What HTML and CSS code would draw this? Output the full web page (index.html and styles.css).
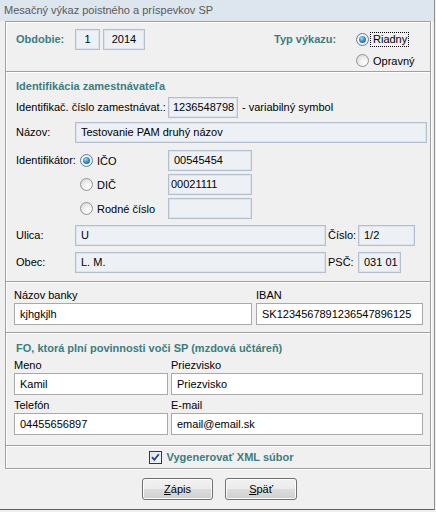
FILE: index.html
```html
<!DOCTYPE html>
<html lang="sk">
<head>
<meta charset="utf-8">
<title>Mesačný výkaz poistného a príspevkov SP</title>
<link rel="stylesheet" href="styles.css">
</head>
<body>
<div class="window">
  <div class="titlebar">Mesačný výkaz poistného a príspevkov SP</div>
  <div class="frame">
    <section class="panel p1">
      <div class="period">
        <span class="blbl w59">Obdobie:</span>
        <span class="ro f-month">1</span>
        <span class="ro f-year">2014</span>
      </div>
      <div class="typ">
        <span class="blbl typ-lbl">Typ výkazu:</span>
        <div class="radios">
          <label class="ropt"><span class="radio on"></span><span class="focus">Riadny</span></label>
          <label class="ropt"><span class="radio"></span><span class="rtext">Opravný</span></label>
        </div>
      </div>
    </section>

    <section class="panel p2">
      <h2 class="ptitle">Identifikácia zamestnávateľa</h2>
      <div class="row r1">
        <span class="lbl w152">Identifikač. číslo zamestnávat.:</span>
        <span class="ro f-ico">1236548798</span>
        <span class="lbl after">- variabilný symbol</span>
      </div>
      <div class="row r2">
        <span class="lbl w59">Názov:</span>
        <span class="ro grow">Testovanie PAM druhý názov</span>
      </div>
      <div class="idgrid">
        <span class="lbl idlbl">Identifikátor:</span>
        <label class="ropt idopt"><span class="radio on"></span><span class="rtext">IČO</span></label>
        <span class="ro f-id pad5">00545454</span>
        <label class="ropt idopt"><span class="radio"></span><span class="rtext">DIČ</span></label>
        <span class="ro f-id pad2">00021111</span>
        <label class="ropt idopt"><span class="radio"></span><span class="rtext">Rodné číslo</span></label>
        <span class="ro f-id"></span>
      </div>
      <div class="row r6">
        <span class="lbl w59">Ulica:</span>
        <span class="ro f-street">U</span>
        <span class="lbl w32">Číslo:</span>
        <span class="ro f-num">1/2</span>
      </div>
      <div class="row r7">
        <span class="lbl w59">Obec:</span>
        <span class="ro f-street">L. M.</span>
        <span class="lbl w32">PSČ:</span>
        <span class="ro f-psc">031 01</span>
      </div>
    </section>

    <section class="panel p3">
      <div class="col c-bank">
        <span class="clbl">Názov banky</span>
        <span class="wf">kjhgkjlh</span>
      </div>
      <div class="col c-iban">
        <span class="clbl">IBAN</span>
        <span class="wf">SK1234567891236547896125</span>
      </div>
    </section>

    <section class="panel p4">
      <h2 class="ptitle t4">FO, ktorá plní povinnosti voči SP (mzdová učtáreň)</h2>
      <div class="fogrid">
        <div class="col"><span class="clbl">Meno</span><span class="wf">Kamil</span></div>
        <div class="col"><span class="clbl">Priezvisko</span><span class="wf">Priezvisko</span></div>
        <div class="col"><span class="clbl">Telefón</span><span class="wf">04455656897</span></div>
        <div class="col"><span class="clbl">E-mail</span><span class="wf">email@email.sk</span></div>
      </div>
    </section>

    <section class="panel p5">
      <label class="chk">
        <svg class="cbox" width="13" height="13" viewBox="0 0 13 13" aria-hidden="true">
          <defs>
            <linearGradient id="cg" x1="0" y1="0" x2="1" y2="1">
              <stop offset="0" stop-color="#dfe6ee"/>
              <stop offset="1" stop-color="#ffffff"/>
            </linearGradient>
          </defs>
          <rect x="0.5" y="0.5" width="12" height="12" fill="#ffffff" stroke="#1e395b"/>
          <rect x="2" y="2" width="9" height="9" fill="url(#cg)" stroke="#c5cfdb" stroke-width="0.6"/>
          <path d="M3 6.2 L5.3 8.8 L9.8 3.2" fill="none" stroke="#21409a" stroke-width="1.8"/>
        </svg>
        <span class="blbl">Vygenerovať XML súbor</span>
      </label>
    </section>
  </div>
  <div class="buttons">
    <button class="btn" type="button"><u>Z</u>ápis</button>
    <button class="btn" type="button"><u>S</u>päť</button>
  </div>
</div>
</body>
</html>
```
FILE: styles.css
```css
html, body {
  margin: 0;
  padding: 0;
  background: #f0f0f0;
}
body {
  font-family: "Liberation Sans", Arial, sans-serif;
  font-size: 11px;
  color: #000;
}
.window {
  width: 435px;
  height: 510px;
  box-sizing: border-box;
  border-right: 1px solid #8c8c8c;
  border-bottom: 1px solid #5f5f5f;
  background: #f0f0f0;
}
.titlebar {
  height: 21px;
  line-height: 20px;
  padding-left: 4px;
  background: #dde5ee;
  color: #5a5a5a;
  font-size: 11px;
  white-space: nowrap;
}
.frame {
  margin-left: 5px;
  width: 424px;
  border-left: 1px solid #a0a0a0;
  border-right: 1px solid #a0a0a0;
  border-top: 1px solid #a0a0a0;
  box-shadow: 1px 0 0 #ffffff, inset 1px 1px 0 #ffffff;
}
.panel {
  border-bottom: 1px solid #a0a0a0;
  box-shadow: 0 1px 0 #ffffff;
  box-sizing: border-box;
}
.lbl {
  display: inline-block;
  white-space: nowrap;
  line-height: 21px;
}
.blbl {
  font-weight: bold;
  color: #3c7d7e;
  white-space: nowrap;
}
.w59 { width: 59px; }
.w152 { width: 152px; }
.w32 { width: 32px; padding-left: 2px; box-sizing: border-box; }

.ro {
  display: inline-block;
  box-sizing: border-box;
  height: 21px;
  line-height: 19px;
  padding-left: 5px;
  border: 1px solid #b3bfcc;
  box-shadow: inset 0 0 0 1px #dde4ec;
  background: #edf1f5;
  white-space: nowrap;
  overflow: hidden;
}

/* Panel 1 */
.p1 {
  height: 50px;
  display: flex;
  padding: 7px 0 0 10px;
}
.period {
  display: flex;
  align-items: center;
  height: 21px;
  width: 258px;
}
.period .blbl { line-height: 21px; }
.f-month { width: 25px; margin-right: 3px; text-align: center; padding-left: 0; }
.f-year { width: 42px; text-align: center; padding-left: 0; }
.typ { display: flex; }
.typ-lbl { width: 82px; line-height: 21px; }
.radios { display: flex; flex-direction: column; }
.ropt {
  display: flex;
  align-items: center;
  height: 21px;
  white-space: nowrap;
}
.radio {
  width: 13px;
  height: 13px;
  box-sizing: border-box;
  border-radius: 50%;
  border: 1px solid #939393;
  background: radial-gradient(circle at 65% 70%, #ffffff 0, #f4f4f4 30%, #d3d3d3 100%);
  position: relative;
  flex: none;
}
.radio.on {
  border-color: #5b7ea3;
  background: radial-gradient(circle at 50% 50%, #ffffff 40%, #dadada 100%);
}
.radio.on::after {
  content: "";
  position: absolute;
  left: 2px;
  top: 2px;
  width: 7px;
  height: 7px;
  border-radius: 50%;
  background: radial-gradient(circle at 40% 35%, #a6dcf8 0, #3b8ccd 45%, #174d86 100%);
}
.rtext { margin-left: 4px; }
.focus {
  margin-left: 1px;
  padding: 0 1px 0 2px;
  line-height: 13px;
  border: 1px dotted #000;
}

/* Panel 2 */
.p2 {
  height: 210px;
  padding: 7px 3px 0 10px;
}
.ptitle {
  margin: 0;
  font-size: 11px;
  font-weight: bold;
  color: #3c7d7e;
  line-height: 14px;
  white-space: nowrap;
}
.row {
  display: flex;
  align-items: center;
}
.r1 { margin-top: 4px; }
.r2 { margin-top: 4px; }
.r6 { margin-top: 6px; }
.r7 { margin-top: 6px; }
.f-ico { width: 70px; padding-left: 4px; }
.after { margin-left: 4px; }
.grow { flex: 1; }
.idgrid {
  margin-top: 7px;
  display: grid;
  grid-template-columns: 64px 88px 84px;
  grid-auto-rows: 21px;
  row-gap: 3px;
}
.idlbl { line-height: 21px; }
.idopt { grid-column: 2; }
.idgrid > .f-id { grid-column: 3; }
.idgrid > .idlbl { grid-row: 1; grid-column: 1; }
.pad5 { padding-left: 5px; }
.pad2 { padding-left: 2px; }
.f-id { width: 84px; }
.f-street { width: 251px; }
.f-num { width: 57px; }
.f-psc { width: 43px; }

/* Panel 3 */
.p3 {
  height: 51px;
  display: flex;
  gap: 4px;
  padding: 6px 0 0 8px;
}
.col {
  display: flex;
  flex-direction: column;
}
.c-bank { width: 238px; }
.c-iban { width: 167px; }
.clbl {
  line-height: 14px;
  height: 15px;
  white-space: nowrap;
}
.wf {
  display: block;
  box-sizing: border-box;
  height: 22px;
  line-height: 20px;
  padding-left: 5px;
  border: 1px solid #a9a9a9;
  background: #ffffff;
  white-space: nowrap;
  overflow: hidden;
}

/* Panel 4 */
.p4 {
  height: 113px;
  padding: 8px 0 0 8px;
}
.t4 { margin-left: 2px; }
.fogrid {
  margin-top: 4px;
  display: grid;
  grid-template-columns: 154px 252px;
  column-gap: 3px;
  row-gap: 4px;
}
.fogrid .clbl { height: 14px; line-height: 13px; }

/* Panel 5 */
.p5 {
  height: 23px;
  display: flex;
  justify-content: center;
  align-items: center;
}
.chk {
  display: flex;
  align-items: center;
  gap: 5px;
  margin-left: 6px;
}
.cbox { display: block; }

/* Buttons */
.buttons {
  display: flex;
  gap: 12px;
  padding-left: 142px;
  margin-top: 9px;
}
.btn {
  width: 71px;
  height: 22px;
  padding: 0;
  font-family: "Liberation Sans", Arial, sans-serif;
  font-size: 11px;
  color: #000;
  border: 1px solid #707070;
  border-radius: 3px;
  background: linear-gradient(#f2f2f2 0, #ebebeb 50%, #dddddd 50%, #cfcfcf 100%);
  box-shadow: inset 0 0 0 1px #fcfcfc;
}
.btn + .btn { width: 72px; }
```
